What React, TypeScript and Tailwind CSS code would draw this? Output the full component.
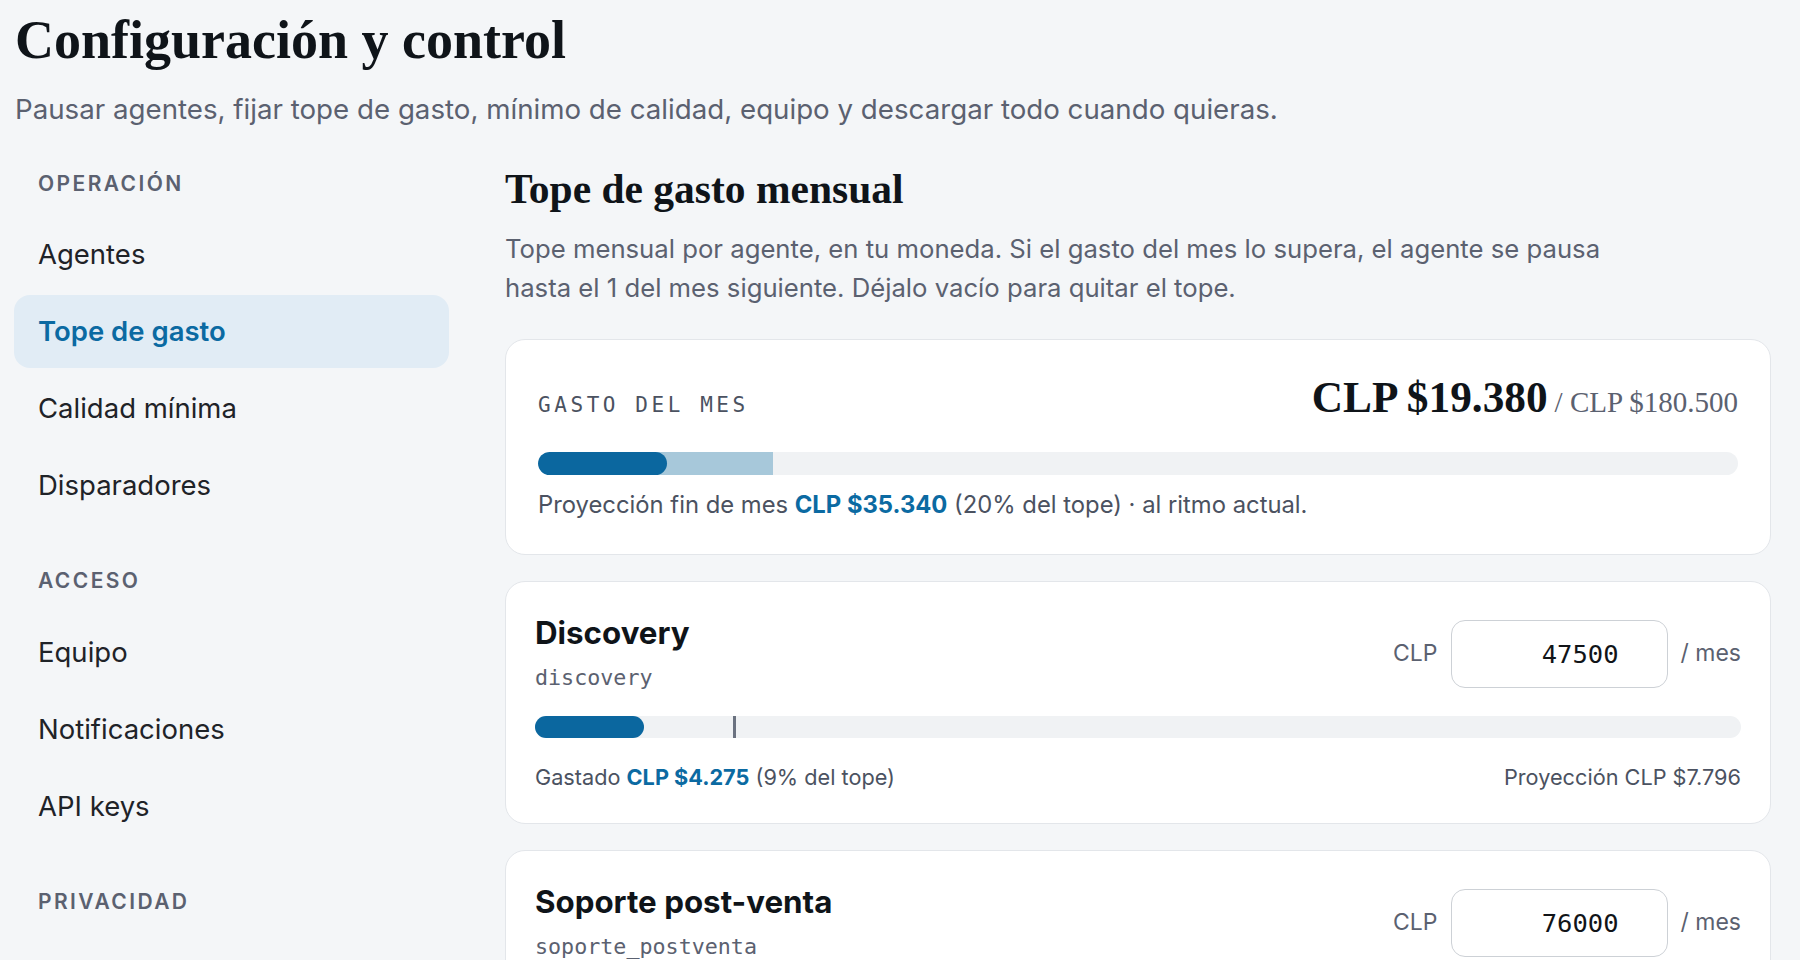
import React from "react";

type Agent = {
  name: string;
  slug: string;
  cap: number;
  spent: string;
  spentPct: number;
  proj: string;
  projPct: number;
};

const agents: Agent[] = [
  { name: "Discovery", slug: "discovery", cap: 47500, spent: "CLP $4.275", spentPct: 9, proj: "CLP $7.796", projPct: 16.4 },
  { name: "Soporte post-venta", slug: "soporte_postventa", cap: 76000, spent: "CLP $11.020", spentPct: 14.5, proj: "CLP $20.096", projPct: 26.4 },
];

function NavItem({ label, active }: { label: string; active?: boolean }) {
  if (active) {
    return (
      <a className="flex h-[73px] items-center rounded-[16px] bg-[#e1ecf5] px-[24px] text-[27.5px] font-semibold text-[#0b6aa2]">
        {label}
      </a>
    );
  }
  return (
    <a className="flex h-[73px] items-center rounded-[16px] px-[24px] text-[27.5px] text-[#1f2328]">
      {label}
    </a>
  );
}

function AgentCard({ a }: { a: Agent }) {
  return (
    <section className="rounded-[20px] border border-[#e3e6ea] bg-white px-[29px] pt-[33px] pb-[31px]">
      <div className="flex items-center justify-between">
        <div>
          <div className="text-[31.3px] leading-[36px] font-bold text-[#0f1419]">{a.name}</div>
          <div className="mt-[13px] font-['DejaVu_Sans_Mono',monospace] text-[21.7px] leading-[28px] text-[#5b6170]">
            {a.slug}
          </div>
        </div>
        <div className="flex items-center gap-[13px]">
          <span className="text-[23px] text-[#5b6170]">CLP</span>
          <input
            type="text"
            defaultValue={String(a.cap)}
            className="h-[68px] w-[217px] rounded-[14px] border border-[#cdd1d6] bg-white pr-[48px] text-right font-['DejaVu_Sans_Mono',monospace] text-[25.5px] text-[#111418] outline-none"
          />
          <span className="text-[23px] text-[#5b6170]">/ mes</span>
        </div>
      </div>
      <div className="relative mt-[24px] h-[22px] rounded-full bg-[#f0f2f4]">
        <div className="absolute top-0 bottom-0 left-0 rounded-full bg-[#0b679f]" style={{ width: `${a.spentPct}%` }} />
        <div className="absolute top-0 bottom-0 w-[3px] bg-[#6b7280]" style={{ left: `${a.projPct}%` }} />
      </div>
      <div className="mt-[24px] flex justify-between text-[21.7px] leading-[30px] text-[#4b5261]">
        <span>
          Gastado <b className="font-bold text-[#0b6aa2]">{a.spent}</b> ({Math.round(a.spentPct)}% del tope)
        </span>
        <span>Proyección {a.proj}</span>
      </div>
    </section>
  );
}

export default function App() {
  const spentPct = (19380 / 180500) * 100;
  const projPct = (35340 / 180500) * 100;
  return (
    <div className="h-screen overflow-hidden bg-[#f4f6f8] pt-[13px] pr-[29px] pl-[14px] font-['Inter',sans-serif]">
      <h1 className="pl-[1px] font-['Liberation_Serif',serif] text-[54px] leading-none font-bold text-[#0f1419]">
        Configuración y control
      </h1>
      <p className="mt-[24px] pl-[1px] text-[27.7px] leading-[36px] text-[#5b6170]">
        Pausar agentes, fijar tope de gasto, mínimo de calidad, equipo y descargar todo cuando quieras.
      </p>

      <div className="mt-[33px] flex items-start gap-[56px]">
        <aside className="w-[435px] shrink-0 pt-[10px]">
          <div className="pl-[24px] text-[21px] leading-[28px] font-semibold tracking-[0.115em] text-[#5b6170]">OPERACIÓN</div>
          <nav className="mt-[20px] flex flex-col gap-[4px]">
            <NavItem label="Agentes" />
            <NavItem label="Tope de gasto" active />
            <NavItem label="Calidad mínima" />
            <NavItem label="Disparadores" />
          </nav>
          <div className="mt-[45px] pl-[24px] text-[21px] leading-[28px] font-semibold tracking-[0.115em] text-[#5b6170]">ACCESO</div>
          <nav className="mt-[21px] flex flex-col gap-[4px]">
            <NavItem label="Equipo" />
            <NavItem label="Notificaciones" />
            <NavItem label="API keys" />
          </nav>
          <div className="mt-[45px] pl-[24px] text-[21px] leading-[28px] font-semibold tracking-[0.115em] text-[#5b6170]">PRIVACIDAD</div>
          <nav className="mt-[20px] flex flex-col gap-[4px]">
            <NavItem label="Exportar datos" />
            <NavItem label="Retención" />
          </nav>
        </aside>

        <main className="min-w-0 flex-1 pt-[9px]">
          <h2 className="font-['Liberation_Serif',serif] text-[41.5px] leading-none font-bold text-[#0f1419]">
            Tope de gasto mensual
          </h2>
          <p className="mt-[18px] max-w-[1120px] text-[25.7px] leading-[39px] text-[#5b6170]">
            Tope mensual por agente, en tu moneda. Si el gasto del mes lo supera, el agente se pausa hasta el 1 del mes
            siguiente. Déjalo vacío para quitar el tope.
          </p>

          <div className="mt-[32px] flex flex-col gap-[26px]">
            <section className="rounded-[20px] border border-[#e3e6ea] bg-white px-[32px] pt-[36px] pb-[34px]">
              <div className="flex items-baseline justify-between">
                <span className="font-['DejaVu_Sans_Mono',monospace] text-[21px] tracking-[0.17em] text-[#4b5261]">
                  GASTO DEL MES
                </span>
                <span className="font-['Liberation_Serif',serif] text-[#0f1419]">
                  <span className="text-[43.3px] leading-none font-bold">CLP $19.380</span>
                  <span className="ml-[7px] text-[29px] text-[#5b6170]">/ CLP $180.500</span>
                </span>
              </div>
              <div className="relative mt-[28px] h-[23px] overflow-hidden rounded-full bg-[#f0f2f4]">
                <div className="absolute top-0 bottom-0 left-0 bg-[#a7c8da]" style={{ width: `${projPct}%` }} />
                <div className="absolute top-0 bottom-0 left-0 rounded-full bg-[#0b679f]" style={{ width: `${spentPct}%` }} />
              </div>
              <p className="mt-[15px] text-[23.8px] leading-[30px] text-[#4b5261]">
                Proyección fin de mes <b className="font-bold text-[#0b6aa2]">CLP $35.340</b> (20% del tope) · al ritmo actual.
              </p>
            </section>

            {agents.map((a) => (
              <AgentCard key={a.slug} a={a} />
            ))}
          </div>
        </main>
      </div>
    </div>
  );
}
